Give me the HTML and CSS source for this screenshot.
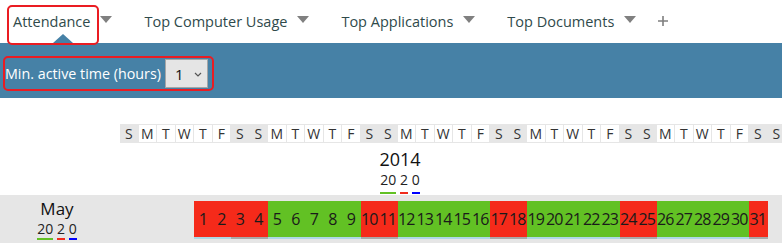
FILE: index.html
```html
<!DOCTYPE html>
<html>
<head>
<meta charset="utf-8">
<link rel="stylesheet" href="styles.css">
</head>
<body>
<nav class="tabs">
  <div class="tab active"><span class="tab-label">Attendance</span><span class="caret"></span></div>
  <div class="tab"><span class="tab-label">Top Computer Usage</span><span class="caret"></span></div>
  <div class="tab"><span class="tab-label">Top Applications</span><span class="caret"></span></div>
  <div class="tab"><span class="tab-label">Top Documents</span><span class="caret"></span></div>
  <div class="add"><svg width="10" height="10" viewBox="0 0 10 10"><path d="M5 0V10M0 5H10" stroke="#7f7f7f" stroke-width="1.6"/></svg></div>
</nav>
<div class="toolbar">
  <div class="filter">
    <span class="filter-label">Min. active time (hours)</span>
    <span class="select"><span class="select-value">1</span><svg class="chev" width="8" height="5" viewBox="0 0 8 5"><path d="M1 1L4 4L7 1" fill="none" stroke="#555" stroke-width="1.2"/></svg></span>
  </div>
</div>
<div class="cal">
  <div class="cal-row">
    <div class="cal-label"></div>
    <div class="wk-head">
      <span class="wk we">S</span><span class="wk">M</span><span class="wk">T</span><span class="wk">W</span><span class="wk">T</span><span class="wk">F</span><span class="wk we">S</span>
      <span class="wk we">S</span><span class="wk">M</span><span class="wk">T</span><span class="wk">W</span><span class="wk">T</span><span class="wk">F</span><span class="wk we">S</span>
      <span class="wk we">S</span><span class="wk">M</span><span class="wk">T</span><span class="wk">W</span><span class="wk">T</span><span class="wk">F</span><span class="wk we">S</span>
      <span class="wk we">S</span><span class="wk">M</span><span class="wk">T</span><span class="wk">W</span><span class="wk">T</span><span class="wk">F</span><span class="wk we">S</span>
      <span class="wk we">S</span><span class="wk">M</span><span class="wk">T</span><span class="wk">W</span><span class="wk">T</span><span class="wk">F</span><span class="wk we">S</span>
      <span class="wk we">S</span>
    </div>
  </div>
  <div class="year">
    <div class="year-title">2014</div>
    <div class="counts"><a class="cnt c-ok">20</a> <a class="cnt c-bad">2</a> <a class="cnt c-blue">0</a></div>
  </div>
  <div class="month-row">
    <div class="cal-label month-label">
      <div class="month-title">May</div>
      <div class="counts"><a class="cnt c-ok">20</a> <a class="cnt c-bad">2</a> <a class="cnt c-blue">0</a></div>
    </div>
    <div class="days">
      <span class="day empty"></span><span class="day empty"></span><span class="day empty"></span><span class="day empty"></span>
      <span class="day bad">1</span><span class="day bad">2</span><span class="day bad we">3</span>
      <span class="day bad we">4</span><span class="day ok">5</span><span class="day ok">6</span><span class="day ok">7</span><span class="day ok">8</span><span class="day ok">9</span><span class="day bad we">10</span>
      <span class="day bad we">11</span><span class="day ok">12</span><span class="day ok">13</span><span class="day ok">14</span><span class="day ok">15</span><span class="day ok">16</span><span class="day bad we">17</span>
      <span class="day bad we">18</span><span class="day ok">19</span><span class="day ok">20</span><span class="day ok">21</span><span class="day ok">22</span><span class="day ok">23</span><span class="day bad we">24</span>
      <span class="day bad we">25</span><span class="day ok">26</span><span class="day ok">27</span><span class="day ok">28</span><span class="day ok">29</span><span class="day ok">30</span><span class="day bad we">31</span>
    </div>
  </div>
</div>
</body>
</html>
```

FILE: styles.css
```css
* { box-sizing: border-box; }
html, body { margin: 0; padding: 0; overflow: hidden; }
body {
  font-family: "Open Sans", "Noto Sans", sans-serif;
  background: #fff;
  color: #222;
  width: 782px;
}

.tabs {
  height: 43px;
  display: flex;
  align-items: center;
}
.tab {
  position: relative;
  display: flex;
  align-items: center;
  height: 43px;
  padding: 0 16px;
}
.tab:first-child { padding-left: 13px; }
.tab-label {
  position: relative;
  font-size: 14.5px;
  line-height: 20px;
  color: #2f4a4b;
}
.caret {
  width: 0;
  height: 0;
  margin-left: 10px;
  margin-top: -4px;
  border-left: 6.5px solid transparent;
  border-right: 6.5px solid transparent;
  border-top: 7px solid #808080;
}
.tab.active .tab-label::after {
  content: "";
  position: absolute;
  top: -7px;
  bottom: -13px;
  left: -6px;
  right: -9px;
  border: 2px solid #ea1c22;
  border-radius: 5px;
}
.tab.active::before {
  content: "";
  position: absolute;
  bottom: 0;
  left: 53px;
  width: 0;
  height: 0;
  border-left: 10px solid transparent;
  border-right: 10px solid transparent;
  border-bottom: 9px solid #4681a6;
}
.add {
  display: flex;
  align-items: center;
  height: 43px;
  padding-left: 6px;
  margin-top: -2px;
}

.toolbar {
  height: 55px;
  background: #4681a6;
  display: flex;
  align-items: center;
  padding: 6px 0 0 5px;
}
.filter {
  position: relative;
  display: flex;
  align-items: center;
  gap: 4px;
}
.filter::after {
  content: "";
  position: absolute;
  top: -3px;
  bottom: -3px;
  left: -2px;
  right: -6px;
  border: 2px solid #ea1c22;
  border-radius: 5px;
}
.filter-label {
  color: #fff;
  font-size: 14.3px;
  line-height: 20px;
}
.select {
  width: 43px;
  height: 29px;
  background: #e5e5e5;
  border: 1px solid #a6a6a6;
  display: flex;
  align-items: center;
  padding-left: 9px;
  gap: 10px;
}
.select-value { font-size: 15px; color: #111; }
.chev { margin-top: 1px; }

.cal { padding-top: 26px; }
.cal-row { display: flex; }
.cal-label { width: 120px; flex: none; }
.wk-head {
  display: flex;
  gap: 1px;
  padding: 1px 0;
  background: #e6e6e6;
  flex: none;
}
.wk {
  width: 17.5px;
  height: 17px;
  flex: none;
  background: #fff;
  font-size: 14px;
  line-height: 17px;
  text-align: center;
  color: #333;
}
.wk.we { background: transparent; }

.year {
  text-align: center;
  width: 800px;
  padding-top: 4px;
  height: 52px;
}
.year-title {
  font-size: 18px;
  line-height: 24px;
  color: #111;
}
.counts {
  font-size: 14px;
  line-height: 17px;
  color: #222;
}
.cnt {
  display: inline-block;
  padding-bottom: 4px;
  border-bottom: 2px solid;
  line-height: 17px;
}
.c-ok { border-color: #62c124; }
.c-bad { border-color: #f02c1c; }
.c-blue { border-color: #0000ff; }

.month-row {
  display: flex;
  background: #e6e6e6;
  height: 48px;
}
.month-label {
  text-align: center;
  padding-right: 6px;
  padding-top: 4px;
}
.month-title {
  font-size: 17px;
  line-height: 20px;
  color: #111;
}
.month-label .counts { margin-top: 1px; }
.month-label .cnt { padding-bottom: 1px; }
.days { display: flex; flex: none; margin-top: 6px; align-self: flex-start; }
.day {
  width: 18.5px;
  height: 38px;
  flex: none;
  font-size: 16px;
  line-height: 36px;
  text-align: center;
  color: #1a1a1a;
  border-bottom: 2px solid #add8e6;
  letter-spacing: -1px;
  text-indent: -1px;
}
.day.we { border-bottom-color: #a9a9a9; }
.day.empty { border-bottom-color: transparent; }
.day.ok { background: #62c124; }
.day.bad { background: #f52a1a; }
```
